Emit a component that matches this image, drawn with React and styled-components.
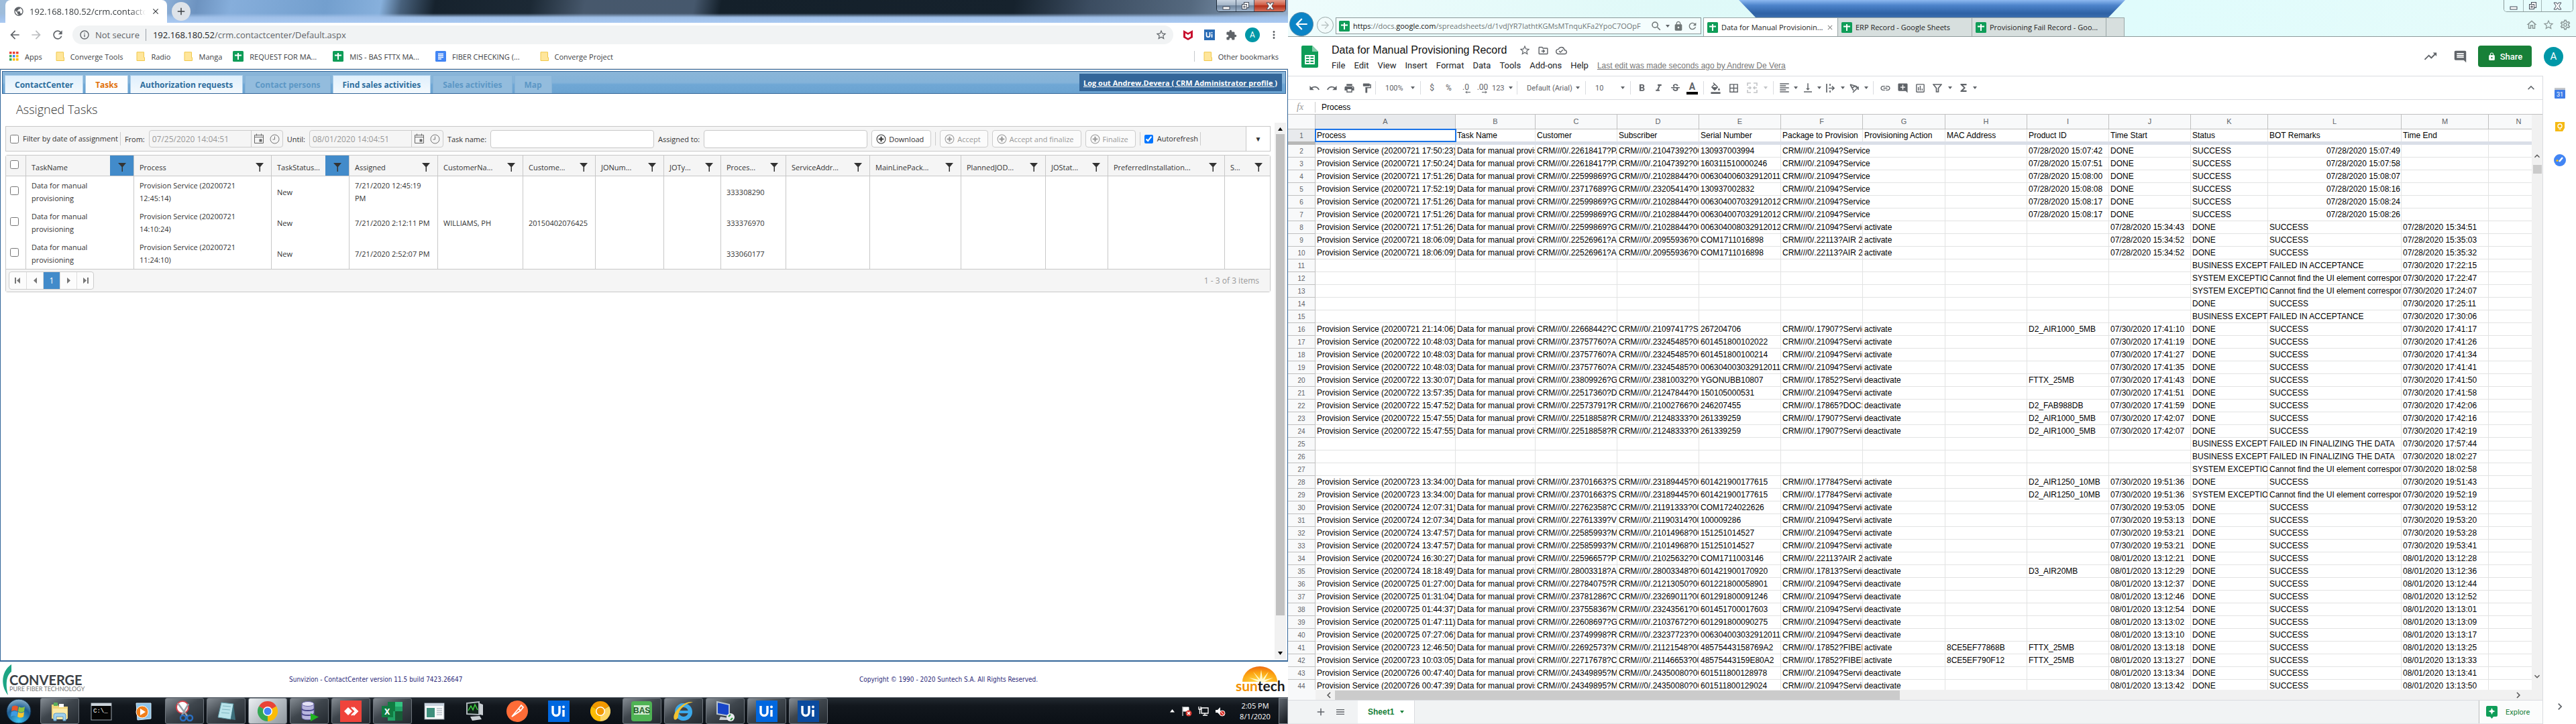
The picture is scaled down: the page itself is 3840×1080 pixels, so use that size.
import React from "react";
import styled, { createGlobalStyle, css } from "styled-components";
import {
  MdPublic, MdClose, MdAdd, MdArrowBack, MdArrowForward, MdRefresh, MdInfoOutline, MdStarBorder,
  MdExtension, MdMoreVert, MdUndo, MdRedo, MdPrint, MdFormatPaint, MdFormatBold, MdFormatItalic,
  MdStrikethroughS, MdFormatColorFill, MdBorderAll, MdFormatAlignLeft, MdVerticalAlignBottom,
  MdLink, MdAddComment, MdOutlineInsertChart, MdFunctions, MdKeyboardArrowUp, MdKeyboardArrowDown,
  MdChevronLeft, MdChevronRight, MdTrendingUp, MdComment, MdLock, MdOutlineDriveFileMove,
  MdOutlineCloudDone, MdMenu, MdSearch, MdOutlineHome, MdOutlineSettings,
} from "react-icons/md";

const segoe = `"Open Sans", "Noto Sans", sans-serif`;
const arial = `"Liberation Sans", Arial, sans-serif`;
const roboto = `Roboto, "Liberation Sans", sans-serif`;

const Global = createGlobalStyle`
  * { box-sizing: border-box; }
  body { margin: 0; background: #fff; overflow: hidden; }
  button, input, select { font: inherit; color: inherit; margin: 0; }
  button { cursor: pointer; }
  svg { display: block; flex: none; }
  a { color: inherit; }
`;

const Desktop = styled.div`
  display: grid;
  grid-template-columns: minmax(0, 1fr) minmax(0, 1fr);
  height: 100vh;
`;
const Screen = styled.div`
  display: flex;
  flex-direction: column;
  min-width: 0;
  min-height: 0;
  overflow: hidden;
  background: #fff;
  font-family: ${segoe};
`;
const Spacer = styled.div`
  flex: 1;
`;
const PlainButton = styled.button`
  display: inline-flex;
  align-items: center;
  justify-content: center;
  padding: 0;
  border: 0;
  background: none;
  width: ${(p) => (p.$w ? `${p.$w}px` : "auto")};
  height: ${(p) => (p.$h ? `${p.$h}px` : "auto")};
  color: ${(p) => p.$color || "#5f6368"};
  flex: none;
`;

/* ---------- window caption buttons ---------- */
const CaptionBox = styled.div`
  display: flex;
  height: 18px;
  border: 1px solid ${(p) => (p.$light ? "#8c9c9c" : "#1d2a38")};
  border-top: 0;
  border-radius: 0 0 5px 5px;
  overflow: hidden;
`;
const Caption = styled.button`
  display: flex;
  align-items: center;
  justify-content: center;
  width: ${(p) => p.$w}px;
  padding: 0;
  border: 0;
  border-left: ${(p) => (p.$first ? 0 : 1)}px solid ${(p) => (p.$light ? "#a4b6b6" : "#4b5b70")};
  background: ${(p) =>
    p.$light ? "#e6fcfc" : p.$close
      ? "linear-gradient(#e3a08f, #cf5a42 45%, #b3301a 50%, #d4705a)"
      : "linear-gradient(#c9d5e2, #a4b5c8 45%, #71869e 50%, #9db2c9)"};
`;
const Captions = ({ light }) => (
  <CaptionBox $light={light}>
    <Caption $w={28} $first $light={light} aria-label="Minimize">
      <svg width="12" height="12"><rect x="1" y="7" width="10" height="4" fill="#fff" stroke="#444b58" /></svg>
    </Caption>
    <Caption $w={27} $light={light} aria-label="Restore">
      <svg width="13" height="13" fill="#fff" stroke="#444b58"><rect x="4.5" y="1.5" width="7" height="8" /><rect x="1.5" y="4.5" width="7" height="7" /><rect x="4" y="7" width="2" height="2" /></svg>
    </Caption>
    <Caption $w={47} $close $light={light} aria-label="Close">
      <svg width="13" height="12" viewBox="0 0 13 12"><path d="M1 1h4l1.5 2.5L8 1h4L8.7 6 12 11H8L6.5 8.5 5 11H1l3.300-5z" fill="#fff" stroke="#444b58" /></svg>
    </Caption>
  </CaptionBox>
);

/* ---------- chrome browser ---------- */
const TitleBar = styled.header`
  display: flex;
  height: 34px;
  flex: none;
  padding: 0 3px 0 8px;
  background:
    linear-gradient(rgba(163, 196, 236, 0) 20px, #a0c0e8 26px, #a9c9f2 34px),
    linear-gradient(100deg, #9fbddb 0, #8fb1d8 240px, #6d93c0 290px, #86aedb 340px, #739fce 480px, #87b0dc 560px, #48617c 590px, #16222d 640px, #1c2935 780px, #47586c 860px, #46586d 1020px, #14202a 1060px, #16222d 1490px, #3b4c60 1600px, #55697f 1750px, #93abc6 1880px);
`;
const BrowserTab = styled.div`
  display: flex;
  align-items: center;
  gap: 8px;
  width: 241px;
  padding: 0 10px 0 12px;
  border-radius: 8px 8px 0 0;
  background: #fff;
  font-size: 13px;
  color: #3c4043;
`;
const TabTitle = styled.span`
  flex: 1;
  overflow: hidden;
  white-space: nowrap;
  mask-image: linear-gradient(90deg, #000 88%, transparent);
`;
const NewTab = styled(PlainButton)`
  align-self: center;
  margin-left: 7px;
  border-radius: 50%;
  background: #dee3e9;
`;
const NavBar = styled.div`
  display: flex;
  align-items: center;
  height: 36px;
  flex: none;
  padding: 0 5px 0 6px;
`;
const AddressBar = styled.div`
  display: flex;
  align-items: center;
  flex: 1;
  height: 28px;
  margin: 0 6px;
  padding: 0 9px 0 10px;
  border-radius: 14px;
  background: #f1f3f4;
  font-size: 13px;
  line-height: 18px;
  color: #5f6368;
`;
const NotSecure = styled.span`
  margin-left: 8px;
  padding-right: 9px;
  border-right: 1px solid #9aa0a6;
  white-space: nowrap;
`;
const AddressInput = styled.div`
  flex: 1;
  margin-left: 10px;
  b { font-weight: 400; color: #202124; }
`;
const Avatar = styled.button`
  display: flex;
  align-items: center;
  justify-content: center;
  width: ${(p) => p.$size}px;
  height: ${(p) => p.$size}px;
  padding: 0;
  border: 0;
  border-radius: 50%;
  background: #0097a7;
  color: #fff;
  font: ${(p) => p.$text}px ${roboto};
`;
const Bookmarks = styled.nav`
  display: flex;
  align-items: center;
  height: 33px;
  flex: none;
  padding: 0 14px 4px;
  border-bottom: 1px solid #d5d7da;
  font-size: 11px;
  color: #3c4043;
`;
const Bookmark = styled.a`
  display: flex;
  align-items: center;
  gap: 9px;
  margin-right: ${(p) => p.$after || 0}px;
  white-space: nowrap;
  text-decoration: none;
`;
const BookmarkDivider = styled.div`
  width: 1px;
  height: 16px;
  margin-right: 13px;
  background: #c6c9cc;
`;

/* ---------- CRM page ---------- */
const CrmFrame = styled.section`
  display: flex;
  flex-direction: column;
  flex: 1;
  min-height: 0;
  border: 1px solid #336699;
  border-bottom-width: 2px;
`;
const TabStrip = styled.nav`
  display: flex;
  align-items: flex-end;
  height: 34px;
  flex: none;
  margin: 2px 2px 0;
  padding: 0 5px 0 3px;
  border: 1px solid #336699;
  background: linear-gradient(#8ab5d8, #84b3d9 50%, #6fa7d5 60%, #6ba3d1);
  font-size: 12px;
  font-weight: 700;
`;
const CrmTab = styled.button`
  height: 27px;
  margin-right: 3px;
  padding: 0 14px;
  border: 1px solid #a9cdea;
  border-bottom: 0;
  background: linear-gradient(#dfeffc, #f4f9fd);
  color: #2e6e9e;
  font-weight: 700;
  white-space: nowrap;
  ${(p) => p.$active && css`
    background: #fcfdfe;
    color: #e17009;
  `}
  &:disabled {
    background: #93bcdd;
    border-color: #86b3d8;
    color: #5c97c5;
  }
`;
const Logout = styled.a`
  display: flex;
  align-items: center;
  height: 26px;
  margin-bottom: 3px;
  padding: 0 7px 0 6px;
  background: #336699;
  color: #fff;
  font-size: 11px;
  white-space: nowrap;
`;
const CrmContent = styled.div`
  display: flex;
  flex: 1;
  min-height: 0;
  padding: 0 2px 2px 7px;
`;
const CrmMain = styled.main`
  flex: 1;
  min-width: 0;
  margin-right: 6px;
  font-size: 12px;
  color: #333;
`;
const PageTitle = styled.h1`
  height: 48px;
  margin: 0;
  padding-left: 16px;
  font-size: 18px;
  font-weight: 300;
  line-height: 46px;
  color: #333;
`;
const FilterBar = styled.form`
  display: flex;
  align-items: center;
  gap: 6px;
  height: 38px;
  margin-bottom: 5px;
  padding-left: 6px;
  border: 1px solid #c8c8c8;
  background: #f5f5f5;
  white-space: nowrap;
  font-size: 11px;
`;
const CheckLabel = styled.label`
  display: flex;
  align-items: center;
  gap: 6px;
  padding-right: 3px;
  border-right: 1px solid #ccc;
  line-height: 20px;
`;
const Tick = styled.input.attrs({ type: "checkbox" })`
  width: 13px;
  height: 13px;
`;
const DateBox = styled.div`
  display: flex;
  align-items: center;
  width: 200px;
  height: 26px;
  flex: none;
  padding: 0 4px;
  border: 1px solid #ccc;
  border-radius: 4px;
  color: #999;
`;
const DateInput = styled.input`
  flex: 1;
  width: 0;
  min-width: 0;
  height: 24px;
  margin-right: 3px;
  padding: 0;
  border: 0;
  border-right: 1px solid #ccc;
  background: none;
  font-size: 12px;
`;
const TextBox = styled.input`
  flex: 1;
  min-width: 0;
  height: 27px;
  border: 1px solid #c8c8c8;
  border-radius: 4px;
  background: #fff;
`;
const ActionButton = styled.button`
  display: flex;
  align-items: center;
  gap: 4px;
  height: 26px;
  padding: 0 10px 0 6px;
  border: 1px solid #ccc;
  border-radius: 4px;
  background: #fff;
  &:disabled { color: #999; background: #fbfbfb; }
`;
const BarDivider = styled.div`
  width: 1px;
  height: 20px;
  background: #ccc;
`;
const Overflow = styled.button`
  width: 36px;
  align-self: stretch;
  margin-left: 61px;
  padding: 0;
  border: 0;
  border-left: 1px solid #c8c8c8;
  background: #fff;
  font-size: 10px;
`;
const GridBox = styled.div`
  border: 1px solid #c8c8c8;
  border-radius: 3px;
`;
const TaskTable = styled.table`
  width: 100%;
  table-layout: fixed;
  border-collapse: separate;
  border-spacing: 0;
  font-size: 11px;
`;
const TaskHead = styled.th`
  height: 31px;
  padding: 0 0 0 ${(p) => (p.$first ? 6 : 8)}px;
  border-bottom: 1px solid #c8c8c8;
  border-left: ${(p) => (p.$first ? 0 : 1)}px solid #c8c8c8;
  background: #f5f5f5;
  font-weight: 400;
  text-align: left;
`;
const HeadInner = styled.div`
  display: flex;
  align-items: center;
  justify-content: space-between;
  height: 30px;
  white-space: nowrap;
`;
const HeadText = styled.span`
  padding-top: 5px;
`;
const FilterButton = styled.button`
  display: flex;
  align-items: center;
  justify-content: center;
  width: 35px;
  height: 30px;
  flex: none;
  padding: 5px 0 0;
  border: 0;
  background: ${(p) => (p.$on ? "#428bca" : "none")};
`;
const TaskCell = styled.td`
  height: 46px;
  padding: 0 0 0 ${(p) => (p.$first ? 6 : 8)}px;
  border-left: ${(p) => (p.$first ? 0 : 1)}px solid #c8c8c8;
  line-height: 19px;
  color: #333;
`;
const GridFooter = styled.footer`
  display: flex;
  align-items: center;
  justify-content: space-between;
  height: 34px;
  padding: 0 16px 0 4px;
  border-top: 1px solid #c8c8c8;
  background: #f5f5f5;
  color: #999;
`;
const Pager = styled.div`
  display: flex;
  border: 1px solid #ccc;
  border-radius: 4px;
  background: #fcfcfc;
  overflow: hidden;
`;
const PageButton = styled.button`
  display: flex;
  align-items: center;
  justify-content: center;
  width: 25px;
  height: 25px;
  padding: 0;
  border: 0;
  border-left: ${(p) => (p.$first ? 0 : 1)}px solid #ddd;
  background: ${(p) => (p.$on ? "#428bca" : "none")};
  color: ${(p) => (p.$on ? "#fff" : "#777")};
`;
const VScroll = styled.div`
  display: flex;
  flex-direction: column;
  align-items: center;
  width: ${(p) => p.$w}px;
  flex: none;
  margin-top: ${(p) => p.$top || 0}px;
  padding: ${(p) => p.$pad};
  background: #f1f1f1;
`;
const ScrollTrack = styled.div`
  display: flex;
  flex: 1;
  padding: 3px 0 52px;
`;
const Thumb = styled.div`
  width: 13px;
  height: ${(p) => p.$h || "auto"};
  margin-top: ${(p) => p.$top || 0}px;
  background: ${(p) => p.$color};
`;
const CrmFooter = styled.footer`
  display: flex;
  align-items: center;
  height: 53px;
  flex: none;
  padding: 0 4px;
  font: 10px "DejaVu Sans Condensed", "DejaVu Sans", sans-serif;
  color: #2d2a7a;
`;
const FooterText = styled.span`
  width: ${(p) => p.$w}px;
  white-space: nowrap;
`;

/* ---------- taskbar ---------- */
const Taskbar = styled.footer`
  display: flex;
  align-items: stretch;
  height: 40px;
  flex: none;
  border-top: 1px solid #5b636c;
  background: linear-gradient(#232a31, #12171d 30%, #0b1016);
  color: #fff;
`;
const StartButton = styled(PlainButton)`
  width: 56px;
  margin-right: 4px;
`;
const TaskButton = styled.button`
  display: flex;
  align-items: center;
  justify-content: center;
  width: 58px;
  margin-right: 4px;
  padding: 0;
  border: 1px solid ${(p) => (p.$open ? "#6e757d" : "transparent")};
  border-radius: 3px;
  background: ${(p) =>
    p.$focus ? "linear-gradient(135deg, #eceff2, #b9c0c6 50%, #8f979e)"
      : p.$open ? "linear-gradient(150deg, #858c93, #3f464d 45%, #23292f)" : "none"};
`;
const Tray = styled.div`
  display: flex;
  align-items: center;
  gap: 9px;
`;
const Clock = styled.time`
  display: flex;
  flex-direction: column;
  align-items: center;
  width: 70px;
  font-size: 11px;
  line-height: 16px;
`;
const ShowDesktop = styled.button`
  width: 14px;
  padding: 0;
  border: 1px solid #7b828a;
  background: linear-gradient(135deg, #5f666e, #14191f);
`;

/* ---------- IE window ---------- */
const IeBar = styled.header`
  position: relative;
  z-index: 0;
  display: flex;
  align-items: flex-end;
  height: 55px;
  flex: none;
  padding-left: 2px;
  border-bottom: 1px solid #8d9a9b;
  background: linear-gradient(90deg, #eefcfc, #dff9f8 30%, #e0fcfc 66%, #e6fbfa);
  &::before {
    content: "";
    position: absolute;
    z-index: -1;
    top: 0;
    left: 35%;
    width: 30%;
    height: 27px;
    background: linear-gradient(#8db9f0, #4d84cb 8px, #2f62a5 20px, #3d6fae);
    clip-path: polygon(0 0, 100% 0, calc(100% - 26px) 100%, 26px 100%);
  }
`;
const IeBack = styled.button`
  display: flex;
  align-items: center;
  justify-content: center;
  width: 36px;
  height: 36px;
  flex: none;
  padding: 0;
  border: 1px solid #5f8aa5;
  border-radius: 50%;
  background: #0b84c6;
`;
const IeForward = styled(IeBack)`
  width: 25px;
  height: 25px;
  margin: 0 3px 4px 5px;
  border-color: #9aa8a8;
  background: #f2fbfb;
`;
const IeAddress = styled.div`
  display: flex;
  align-items: center;
  gap: 5px;
  width: 545px;
  height: 25px;
  margin-bottom: 3px;
  padding: 0 4px;
  border: 1px solid #8d9a9b;
  background: #f4fdfd;
  font-size: 11px;
  color: #6f7676;
`;
const IeUrl = styled.span`
  flex: 1;
  overflow: hidden;
  white-space: nowrap;
  b { font-weight: 400; color: #111; }
`;
const IeTab = styled.div`
  display: flex;
  align-items: center;
  gap: 5px;
  width: ${(p) => p.$w}px;
  height: 28px;
  margin-left: ${(p) => (p.$on ? 3 : 0)}px;
  padding: 0 5px;
  border: 1px solid #9aa6a6;
  border-bottom: 0;
  border-left-width: ${(p) => (p.$on ? 1 : 0)}px;
  background: ${(p) => (p.$on ? "#fff" : "#d7dfde")};
  font-size: 11px;
  white-space: nowrap;
  color: #222;
`;
const IeTabTitle = styled.span`
  flex: 1;
`;
const IeRight = styled.div`
  display: flex;
  flex-direction: column;
  align-items: flex-end;
  align-self: stretch;
  padding-right: 4px;
`;
const IeTools = styled.div`
  display: flex;
  margin-top: 10px;
`;

/* ---------- google sheets ---------- */
const DocHeader = styled.div`
  display: flex;
  height: 58px;
  flex: none;
  padding: 13px 19px 0 20px;
`;
const DocTitles = styled.div`
  flex: 1;
  margin-left: 20px;
`;
const TitleRow = styled.div`
  display: flex;
  align-items: center;
  gap: 10px;
  height: 18px;
  margin-top: -2px;
`;
const DocTitle = styled.h2`
  margin: 0 8px 0 0;
  font: 400 16px/18px ${arial};
  color: #111;
`;
const MenuRow = styled.div`
  display: flex;
  gap: 13px;
  margin-top: 5px;
  font: 13px/18px ${roboto};
  color: #202124;
`;
const MenuItem = styled.button`
  padding: 0;
  border: 0;
  background: none;
`;
const LastEdit = styled.a`
  font: 12px/18px ${arial};
  color: #777;
`;
const HeaderActions = styled.div`
  display: flex;
  align-items: center;
  height: 32px;
`;
const Share = styled.button`
  display: flex;
  align-items: center;
  justify-content: center;
  gap: 6px;
  width: 80px;
  height: 32px;
  margin: 0 18px 0 4px;
  border: 0;
  border-radius: 4px;
  background: #188038;
  color: #fff;
  font: 500 13px ${roboto};
`;
const SheetBody = styled.div`
  display: flex;
  flex: 1;
  min-height: 0;
`;
const SheetMain = styled.div`
  display: flex;
  flex-direction: column;
  flex: 1;
  min-width: 0;
  border-top: 1px solid #dadce0;
`;
const SidePanel = styled.aside`
  display: flex;
  flex-direction: column;
  align-items: center;
  width: 50px;
  flex: none;
  padding: 16px 0;
  border-left: 1px solid #dadce0;
  gap: 30px;
`;
const ToolRow = styled.div`
  display: flex;
  align-items: center;
  height: 35px;
  flex: none;
  padding: 0 5px 0 26px;
  border-bottom: 1px solid #dadce0;
  font: 12px ${roboto};
  color: #5f6368;
`;
const ToolGroup = styled.div`
  display: flex;
  align-items: center;
  padding: 0 ${(p) => (p.$flush ? 0 : 4)}px;
  border-right: ${(p) => (p.$last ? 0 : 1)}px solid #dadce0;
  height: 20px;
`;
const Combo = styled.button`
  display: flex;
  align-items: center;
  justify-content: space-between;
  width: 35px;
  padding: 0 3px;
  border: 0;
  background: none;
`;
const NumberFormat = styled(Combo)`
  padding: 0 2px;
  font-size: 11px;
`;
const CaretMark = styled.i`
  width: 0;
  height: 0;
  border: 3px solid transparent;
  border-top: 4px solid ${(p) => p.$color || "#5f6368"};
  border-bottom: 0;
`;
const Picker = styled.label`
  display: flex;
  align-items: center;
  width: ${(p) => p.$w}px;
  padding: 0 8px 0 14px;
  font-size: 11px;
  select {
    flex: 1;
    min-width: 0;
    padding: 0;
    border: 0;
    background: none;
    appearance: none;
    outline: 0;
  }
`;
const TextColour = styled.span`
  padding: 0 4px;
  border-bottom: 4px solid #000;
  font: 700 14px/15px ${roboto};
`;
const FormulaRow = styled.div`
  display: flex;
  align-items: center;
  height: 22px;
  flex: none;
  border-bottom: 1px solid #c0c0c0;
  font: 12px ${arial};
`;
const Fx = styled.span`
  width: 41px;
  padding-left: 13px;
  border-right: 1px solid #ccc;
  font: italic 14px "Liberation Serif", serif;
  color: #9a9a9a;
`;
const FormulaInput = styled.input`
  flex: 1;
  padding: 0 9px;
  border: 0;
  color: #000;
`;
const GridWrap = styled.div`
  display: flex;
  flex: 1;
  min-height: 0;
`;
const TableClip = styled.div`
  flex: 1;
  min-width: 0;
  overflow: hidden;
`;
const SheetTable = styled.table`
  width: calc(100% + 26px);
  table-layout: fixed;
  border-collapse: separate;
  border-spacing: 0;
  font: 12px/17px ${arial};
  color: #000;
`;
const ColHead = styled.th`
  height: 22px;
  padding: 0;
  border-right: 1px solid #c0c0c0;
  border-bottom: 1px solid #c0c0c0;
  background: ${(p) => (p.$on ? "#e8eaed" : "#f8f9fa")};
  font-size: 11px;
  font-weight: 400;
  color: #5f6368;
`;
const RowHead = styled.th`
  height: ${(p) => (p.$top ? 18 : 19)}px;
  padding: 0;
  border-right: 1px solid #c0c0c0;
  border-bottom: ${(p) => (p.$top ? 0 : 1)}px solid #c0c0c0;
  background: ${(p) => (p.$top ? "#e8eaed" : "#f8f9fa")};
  font-size: 10px;
  font-weight: 400;
  color: #5f6368;
`;
const Cell = styled.td`
  height: ${(p) => (p.$top ? 18 : 19)}px;
  padding: 0 1px 0 2px;
  border-right: 1px solid ${(p) => (p.$spill ? "transparent" : "#e2e3e3")};
  border-bottom: ${(p) => (p.$top ? 0 : 1)}px solid #e2e3e3;
  overflow: ${(p) => (p.$spill ? "visible" : "hidden")};
  white-space: nowrap;
  text-align: ${(p) => (p.$right ? "right" : "left")};
  ${(p) => p.$selected && css`outline: 2px solid #1a73e8; outline-offset: -1px;`}
`;
const FreezeBar = styled.td`
  height: 5px;
  padding: 0;
  background: ${(p) => (p.$dark ? "#b7b7b7" : "#dadfe8")};
`;
const HScroll = styled.div`
  display: flex;
  align-items: center;
  height: 15px;
  flex: none;
  padding: 0 27px 0 52px;
  background: linear-gradient(90deg, #f8f9fa 41px, #f1f1f1 41px);
`;
const HThumb = styled.div`
  width: 47%;
  height: 14px;
  background: #cbcbcb;
`;
const SheetTabs = styled.footer`
  display: flex;
  align-items: stretch;
  height: 36px;
  flex: none;
  padding-left: 35px;
  border-top: 1px solid #dadce0;
  border-bottom: 1px solid #e4e6e8;
  background: #f1f3f4;
`;
const SheetTab = styled.button`
  display: flex;
  align-items: center;
  gap: 9px;
  margin-left: 12px;
  padding: 0 15px;
  border: 0;
  border-right: 1px solid #dadce0;
  background: #fff;
  color: #188038;
  font: 700 12px ${arial};
`;
const Explore = styled.button`
  display: flex;
  align-items: center;
  gap: 12px;
  width: 95px;
  padding: 0 0 0 10px;
  border: 0;
  border-left: 1px solid #bbb;
  background: #fbfcfc;
  color: #188038;
  font: 11px ${roboto};
`;

/* ---------- small drawings ---------- */
const Folder = () => (
  <svg width="13" height="14" viewBox="0 0 13 14"><path d="M1 .8h10.500v8h1v4.700H1z" fill="#ffe69b" stroke="#f0c84b" /></svg>
);
const SheetMark = () => (
  <svg width="16" height="16" viewBox="0 0 16 16"><rect width="16" height="16" rx="1.5" fill="#0f9d58" /><path d="M8 3v10M3 6.500h10" stroke="#fff" strokeWidth="2" /></svg>
);
const DocMark = () => (
  <svg width="16" height="16" viewBox="0 0 16 16"><rect width="16" height="16" rx="1.5" fill="#4285f4" /><path d="M4 4.500h8M4 7h8M4 9.500h8M4 12h5" stroke="#fff" strokeWidth="1.4" /></svg>
);
const AppsMark = () => (
  <svg width="14" height="14" viewBox="0 0 14 14">
    {["#ea4335", "#ea4335", "#ea4335", "#34a853", "#4285f4", "#fbbc05", "#34a853", "#fbbc05", "#fbbc05"].map((c, i) => (
      <rect key={i} x={(i % 3) * 5} y={Math.floor(i / 3) * 5} width="3.5" height="3.5" fill={c} />
    ))}
  </svg>
);
const Funnel = () => (
  <svg width="12" height="13" viewBox="0 0 12 13"><path d="M0 0h12L7 6v7H5.500V6z" fill="#333" /></svg>
);
const PlusCircle = () => (
  <svg width="15" height="15" viewBox="0 0 14 14" fill="none" stroke="currentColor"><circle cx="7" cy="7" r="6" /><path d="M7 3.500v7M3.500 7h7" strokeWidth="2" /></svg>
);
const CalendarMark = () => (
  <svg width="24" height="16" viewBox="0 0 24 16" fill="none" stroke="#666"><path d="M1.500 2.500h13v12h-13zM1.500 5.500h13M4.500.5v3M11.500.5v3" /><rect x="9" y="9" width="3" height="3" fill="#666" /></svg>
);
const ClockMark = () => (
  <svg width="15" height="15" viewBox="0 0 15 15" fill="none" stroke="#777"><circle cx="7.5" cy="7.5" r="6.5" /><path d="M7.500 3.500v4.500H4.500" /></svg>
);
const Tri = ({ d }) => (
  <svg width="9" height="9" viewBox="0 0 9 9"><path d={d} fill="currentColor" /></svg>
);
const UiMark = ({ size = 32, fill = "#0067df" }) => (
  <svg width={size} height={size} viewBox="0 0 32 32"><rect width="32" height="32" fill={fill} /><path d="M7 8v9.500a5 5 0 0 0 10 0V8M23 14v10" fill="none" stroke="#fff" strokeWidth="3.4" /><circle cx="23" cy="9.5" r="2" fill="#fff" /></svg>
);
const McAfee = () => (
  <svg width="14" height="16" viewBox="0 0 14 16"><path d="M0 1l7 4 7-4v11l-7 4-7-4zM3 5.500v5L7 13l4-2.500v-5L7 8z" fill="#c8102e" fillRule="evenodd" /></svg>
);
const ConvergeLogo = () => (
  <svg width="126" height="48" viewBox="0 0 126 48">
    <path d="M13 1C-3 12-3 34 8 47 4 32 5 18 13 12z" fill="#1da584" />
    <text x="10" y="32" fontFamily="Lato, sans-serif" fontSize="20" fontWeight="700" fill="#3c4146">CONVERGE</text>
    <text x="10" y="41" fontFamily="Lato, sans-serif" fontSize="9" fill="#777">PURE FIBER TECHNOLOGY</text>
  </svg>
);
const SuntechLogo = () => (
  <svg width="74" height="42" viewBox="0 0 74 42">
    <defs><radialGradient id="sun" cx=".5" cy="1" r="1"><stop offset="0" stopColor="#ffe14d" /><stop offset=".6" stopColor="#fca311" /><stop offset="1" stopColor="#ee6a12" /></radialGradient></defs>
    <path d="M10 24a26 23 0 0 1 52 0z" fill="url(#sun)" />
    <path d="M36 25L20 18l14 3-8-12 10 11 2-14 2 14 9-11-6 12 13-3-15 7z" fill="#fff8d0" />
    <text x="0" y="38" fontFamily="Lato, sans-serif" fontSize="21" fontWeight="700" fill="#f29100">sun<tspan fill="#1a1a1a">tech</tspan></text>
  </svg>
);
const SheetsLogo = () => (
  <svg width="25" height="33" viewBox="0 0 25 33"><path d="M2 0h14l9 9v22a2 2 0 0 1-2 2H2a2 2 0 0 1-2-2V2a2 2 0 0 1 2-2z" fill="#0f9d58" /><path d="M16 0l9 9h-9z" fill="#87ceac" /><path d="M6 15h13v12H6zM6 19h13M6 23h13M12.500 15v12" fill="none" stroke="#fff" strokeWidth="1.8" /></svg>
);
const MergeMark = () => (
  <svg width="16" height="16" viewBox="0 0 16 16" fill="none" stroke="#c3c5c8" strokeWidth="1.6"><path d="M1 5V1h5M10 1h5v4M1 11v4h5M10 15h5v-4M1 8h5M15 8h-5M4 6l2 2-2 2M12 6l-2 2 2 2" /></svg>
);
const WrapMark = () => (
  <svg width="15" height="15" viewBox="0 0 15 15" fill="none" stroke="#5f6368" strokeWidth="1.7"><path d="M2 1v13M7 1v3M7 11v3M5 7.500h8M10 4.500l3 3-3 3" /></svg>
);
const RotateMark = () => (
  <svg width="16" height="16" viewBox="0 0 16 16" fill="none" stroke="#5f6368" strokeWidth="1.6"><path d="M2 3l10 3M2 3l5 9M5 8l5-3M6 15l8-8M10 7h4v4" /></svg>
);
const FilterMark = () => (
  <svg width="14" height="14" viewBox="0 0 14 14" fill="none" stroke="#5f6368" strokeWidth="1.7"><path d="M1 2h12L8.500 7.500V13h-3V7.500z" /></svg>
);
const DecimalMark = ({ text, left }) => (
  <svg width="22" height="18" viewBox="0 0 22 18"><text x="11" y="12" fontFamily="Roboto, sans-serif" fontSize="12" fill="#5f6368" textAnchor="middle">{text}</text><path d={left ? "M18 15.500h-7M13 13.500l-2 2 2 2" : "M10 15.500h7M15 13.500l2 2-2 2"} fill="none" stroke="#5f6368" /></svg>
);
const GoogleDisc = ({ a, b, c, center }) => (
  <svg width="30" height="30" viewBox="0 0 30 30">
    <path d="M15 15L2 7.500A15 15 0 0 1 28 7.500z" fill={a} /><path d="M15 15L2 7.500A15 15 0 0 0 15 30z" fill={b} /><path d="M15 15L28 7.500A15 15 0 0 1 15 30z" fill={c} />
    <circle cx="15" cy="15" r="7" fill="#fff" /><circle cx="15" cy="15" r="5.5" fill={center} />
  </svg>
);

const art = {
  explorer: <><path d="M4 6h9l2 3h13v18H4z" fill="#f3d67a" /><path d="M7 3h6v5H7z" fill="#5cae5c" /><path d="M15 5h7v5h-7z" fill="#fff" /><path d="M6 12h21v16H6z" fill="#fbe9a6" /><path d="M7 30v-8a3 3 0 0 1 3-3h12a3 3 0 0 1 3 3v8h-4v-6H11v6z" fill="#9fd0ee" stroke="#5d9cc6" /></>,
  cmd: <><rect x="1" y="4" width="30" height="25" fill="#050505" stroke="#9aa4ae" /><rect x="1" y="4" width="30" height="4" fill="#cbd3da" /><text x="4" y="18" fontSize="9" fill="#fff" fontFamily="Liberation Mono, monospace">C:\_</text></>,
  media: <><path d="M6 4h22v23l-20 2z" fill="#8cc4ea" stroke="#d7ecfa" /><circle cx="15" cy="17" r="9" fill="#f07f1b" stroke="#fff" /><path d="M12 12l8 5-8 5z" fill="#fff" /></>,
  snip: <><circle cx="13" cy="10" r="9" fill="#fff" stroke="#d8404a" strokeWidth="2" /><path d="M6 4l15 20M22 5L12 22" stroke="#9aa1a8" strokeWidth="2.5" /><circle cx="24" cy="26" r="4" fill="none" stroke="#2b6fc2" strokeWidth="2.5" /><circle cx="14" cy="26" r="4" fill="none" stroke="#2b6fc2" strokeWidth="2.5" /></>,
  note: <><path d="M9 3l18 2-4 23L4 25z" fill="#b9e3ea" stroke="#5f9aa6" /><path d="M23 28l4-23 3 24z" fill="#3d6f7b" /><path d="M11 8l12 1M10 13l12 1M9 18l12 1" stroke="#7fb6c1" /></>,
  db: <><path d="M5 5v20c0 5 18 5 18 0V5z" fill="#b8b6df" stroke="#6a67a8" /><ellipse cx="14" cy="5" rx="9" ry="3.5" fill="#e4e3f6" stroke="#6a67a8" /><path d="M5 12c0 4 18 4 18 0M5 19c0 4 18 4 18 0" fill="none" stroke="#4a478c" strokeWidth="2" /><path d="M18 19l12 5.500L18 31z" fill="#21b321" /></>,
  anydesk: <><rect width="32" height="32" fill="#ef443b" /><path d="M12 10l6 6-6 6-6-6z" fill="#fff" /><path d="M17 10l6 6-6 6M20 10l6 6-6 6" fill="none" stroke="#fff" strokeWidth="2" /></>,
  excel: <><path d="M9 2h22v28H9z" fill="#21a366" /><path d="M9 2h11v14H9z" fill="#107c41" /><path d="M20 2h11v7H20z" fill="#33c481" /><path d="M20 16h11v14H20z" fill="#185c37" /><rect y="8" width="17" height="17" fill="#107c41" /><text x="4" y="21" fontSize="13" fontWeight="700" fill="#fff" fontFamily="Roboto, sans-serif">X</text></>,
  windowed: <><rect x="2" y="4" width="29" height="24" fill="#f7f9fa" stroke="#8a949e" /><rect x="2" y="4" width="29" height="4" fill="#c8d3de" /><path d="M5 11h12v14H5z" fill="#3f8f7d" /><path d="M20 12h8M20 15h8M20 18h8M20 21h8" stroke="#9aa6b2" /></>,
  monitor: <><path d="M3 4l18-2v19L3 20z" fill="#10231a" stroke="#aeb6bc" strokeWidth="2" /><path d="M5 15l4-7 3 6 3-8 4 8" stroke="#3fd33f" fill="none" strokeWidth="1.5" /><path d="M22 4l5 2v16l-5-1zM8 24l14-1 3 5-14 2z" fill="#c9ced2" /></>,
  postman: <><circle cx="16" cy="16" r="16" fill="#ff6c37" /><path d="M8 24l10-12 3 3zM18 12l4-5 3 3-4 5z" fill="none" stroke="#fff" strokeWidth="1.8" /></>,
  bas: <><rect y="1" width="31" height="30" rx="4" fill="#4fb354" /><path d="M4 7h23v14H4z" fill="#e5f4e4" opacity=".85" /><text x="3" y="19" fontSize="12" fontWeight="700" fill="#1c5b26" fontFamily="Liberation Sans, sans-serif">BAS</text></>,
  ie: <><circle cx="16" cy="17" r="10" fill="none" stroke="#3ba9ea" strokeWidth="6" /><path d="M8 17h18" stroke="#3ba9ea" strokeWidth="4" /><path d="M2 28C-3 18 20-3 30 3c-10-1-22 11-22 20 0 3-3 7-6 5z" fill="#f2c230" /></>,
  remote: <><path d="M4 2l18 4v17L4 20z" fill="#1745c9" stroke="#b9c4cc" strokeWidth="2" /><path d="M9 24l12 2v3H7z" fill="#c9ced2" /><circle cx="24" cy="25" r="6" fill="#e8ebee" /><path d="M21 24l3-3M24 29l3-3" stroke="#2a9a3a" strokeWidth="2" /></>,
};
const Art = ({ name }) => <svg width="32" height="32" viewBox="0 0 32 32">{art[name]}</svg>;

/* ---------- data ---------- */
const taskColumns = [
  ["", 29], ["TaskName", 161, true], ["Process", 205], ["TaskStatus...", 116, true], ["Assigned", 132],
  ["CustomerNa...", 127], ["Custome...", 108], ["JONum...", 102], ["JOTy...", 85], ["Proces...", 97],
  ["ServiceAddr...", 125], ["MainLinePack...", 136], ["PlannedJOD...", 126], ["JOStat...", 93],
  ["PreferredInstallation...", 174], ["S...", 68],
];
const tasks = [
  ["12:45:14)", ["7/21/2020 12:45:19", "PM"], "", "", "333308290"],
  ["14:10:24)", ["7/21/2020 2:12:11 PM"], "WILLIAMS, PH", "20150402076425", "333376970"],
  ["11:24:10)", ["7/21/2020 2:52:07 PM"], "", "", "333060177"],
];
const sheetCols = [["A", 209], ["B", 119], ["C", 122], ["D", 122], ["E", 122], ["F", 122], ["G", 123], ["H", 122], ["I", 122], ["J", 122], ["K", 115], ["L", 199], ["M", 130], ["N", 0]];
const sheetHeads = ["Process", "Task Name", "Customer", "Subscriber", "Serial Number", "Package to Provision", "Provisioning Action", "MAC Address", "Product ID", "Time Start", "Status", "BOT Remarks", "Time End", ""];
const BE = "BUSINESS EXCEPTI";
const SE = "SYSTEM EXCEPTIO";
const CF = "Cannot find the UI element correspon";
// date | customer | subscriber | serial | package | action | mac | product | start | status | remarks | end
const source = `0721 17:50:23|22618417?PA|21047392?00|130937003994|21094?Service|||07/28/2020 15:07:42|DONE|SUCCESS|07/28/2020 15:07:49|
0721 17:50:24|22618417?PA|21047392?00|160311510000246|21094?Service|||07/28/2020 15:07:51|DONE|SUCCESS|07/28/2020 15:07:58|
0721 17:51:26|22599869?GA|21028844?00|006304006032912011|21094?Service|||07/28/2020 15:08:00|DONE|SUCCESS|07/28/2020 15:08:07|
0721 17:52:19|23717689?GE|23205414?00|130937002832|21094?Service|||07/28/2020 15:08:08|DONE|SUCCESS|07/28/2020 15:08:16|
0721 17:51:26|22599869?GA|21028844?00|006304007032912012|21094?Service|||07/28/2020 15:08:17|DONE|SUCCESS|07/28/2020 15:08:24|
0721 17:51:26|22599869?GA|21028844?00|006304007032912012|21094?Service|||07/28/2020 15:08:17|DONE|SUCCESS|07/28/2020 15:08:26|
0721 17:51:26|22599869?GA|21028844?00|006304008032912012|21094?Servic|activate|||07/28/2020 15:34:43|DONE|SUCCESS|07/28/2020 15:34:51
0721 18:06:09|22526961?AN|20955936?00|COM1711016898|22113?AIR 2|activate|||07/28/2020 15:34:52|DONE|SUCCESS|07/28/2020 15:35:03
0721 18:06:09|22526961?AN|20955936?00|COM1711016898|22113?AIR 2|activate|||07/28/2020 15:34:52|DONE|SUCCESS|07/28/2020 15:35:32
|||||||||${BE}|FAILED IN ACCEPTANCE|07/30/2020 17:22:15
|||||||||${SE}|${CF}|07/30/2020 17:22:47
|||||||||${SE}|${CF}|07/30/2020 17:24:07
|||||||||DONE|SUCCESS|07/30/2020 17:25:11
|||||||||${BE}|FAILED IN ACCEPTANCE|07/30/2020 17:30:06
0721 21:14:06|22668442?Cu|21097417?S|267204706|17907?Servic|activate||D2_AIR1000_5MB|07/30/2020 17:41:10|DONE|SUCCESS|07/30/2020 17:41:17
0722 10:48:03|23757760?AG|23245485?00|601451800102022|21094?Servic|activate|||07/30/2020 17:41:19|DONE|SUCCESS|07/30/2020 17:41:26
0722 10:48:03|23757760?AG|23245485?00|601451800100214|21094?Servic|activate|||07/30/2020 17:41:27|DONE|SUCCESS|07/30/2020 17:41:34
0722 10:48:03|23757760?AG|23245485?00|006304003032912011|21094?Servic|activate|||07/30/2020 17:41:35|DONE|SUCCESS|07/30/2020 17:41:41
0722 13:30:07|23809926?GO|23810032?00|YGONUBB10807|17852?Servic|deactivate||FTTX_25MB|07/30/2020 17:41:43|DONE|SUCCESS|07/30/2020 17:41:50
0722 13:57:35|22517360?DU|21247844?00|150105000531|21094?Servic|activate|||07/30/2020 17:41:51|DONE|SUCCESS|07/30/2020 17:41:58
0722 15:47:52|22573791?RA|21002766?00|246207455|17865?DOCS|deactivate||D2_FAB988DB|07/30/2020 17:41:59|DONE|SUCCESS|07/30/2020 17:42:06
0722 15:47:55|22518858?RA|21248333?00|261339259|17907?Servic|deactivate||D2_AIR1000_5MB|07/30/2020 17:42:07|DONE|SUCCESS|07/30/2020 17:42:16
0722 15:47:55|22518858?RA|21248333?00|261339259|17907?Servic|deactivate||D2_AIR1000_5MB|07/30/2020 17:42:07|DONE|SUCCESS|07/30/2020 17:42:19
|||||||||${BE}|FAILED IN FINALIZING THE DATA|07/30/2020 17:57:44
|||||||||${BE}|FAILED IN FINALIZING THE DATA|07/30/2020 18:02:27
|||||||||${SE}|${CF}|07/30/2020 18:02:58
0723 13:34:00|23701663?SA|23189445?00|601421900177615|17784?Servic|activate||D2_AIR1250_10MB|07/30/2020 19:51:36|DONE|SUCCESS|07/30/2020 19:51:43
0723 13:34:00|23701663?SA|23189445?00|601421900177615|17784?Servic|activate||D2_AIR1250_10MB|07/30/2020 19:51:36|${SE}|${CF}|07/30/2020 19:52:19
0724 12:07:31|22762358?CA|21191333?00|COM1724022626|21094?Servic|activate|||07/30/2020 19:53:05|DONE|SUCCESS|07/30/2020 19:53:12
0724 12:07:34|22761339?VI|21190314?00|100009286|21094?Servic|activate|||07/30/2020 19:53:13|DONE|SUCCESS|07/30/2020 19:53:20
0724 13:47:57|22585993?MI|21014968?00|151251014527|21094?Servic|activate|||07/30/2020 19:53:21|DONE|SUCCESS|07/30/2020 19:53:28
0724 13:47:57|22585993?MI|21014968?00|151251014527|21094?Servic|activate|||07/30/2020 19:53:21|DONE|SUCCESS|07/30/2020 19:53:41
0724 16:30:27|22596657?PE|21025632?00|COM1711003146|22113?AIR 2|activate|||08/01/2020 13:12:21|DONE|SUCCESS|08/01/2020 13:12:28
0724 18:18:49|28003318?AG|28003348?00|601421900170920|17813?Servic|deactivate||D3_AIR20MB|08/01/2020 13:12:29|DONE|SUCCESS|08/01/2020 13:12:36
0725 01:27:00|22784075?RA|21213050?00|601221800058901|21094?Servic|deactivate|||08/01/2020 13:12:37|DONE|SUCCESS|08/01/2020 13:12:44
0725 01:31:04|23781286?CA|23269011?00|601291800091246|21094?Servic|deactivate|||08/01/2020 13:12:46|DONE|SUCCESS|08/01/2020 13:12:52
0725 01:44:37|23755836?MA|23243561?00|601451700017603|21094?Servic|deactivate|||08/01/2020 13:12:54|DONE|SUCCESS|08/01/2020 13:13:01
0725 01:47:11|22608697?GO|21037672?00|601291800090275|21094?Servic|deactivate|||08/01/2020 13:13:02|DONE|SUCCESS|08/01/2020 13:13:09
0725 07:27:06|23749998?RE|23237723?00|006304003032912011|21094?Servic|deactivate|||08/01/2020 13:13:10|DONE|SUCCESS|08/01/2020 13:13:17
0723 12:46:50|22692573?MI|21121548?00|48575443158769A2|17852?FIBEF|activate|8CE5EF77868B|FTTX_25MB|08/01/2020 13:13:18|DONE|SUCCESS|08/01/2020 13:13:25
0723 10:03:05|22717678?CO|21146653?00|48575443159E80A2|17852?FIBEF|activate|8CE5EF790F12|FTTX_25MB|08/01/2020 13:13:27|DONE|SUCCESS|08/01/2020 13:13:33
0726 00:47:40|24349895?MA|24350080?00|601511800128978|21094?Servic|deactivate|||08/01/2020 13:13:34|DONE|SUCCESS|08/01/2020 13:13:41
0726 00:47:39|24349895?MA|24350080?00|601511800129024|21094?Servic|deactivate|||08/01/2020 13:13:42|DONE|SUCCESS|08/01/2020 13:13:50`;
const crm = (v) => (v ? `CRM///0/.${v}` : "");
const records = source.split("\n").map((line) => {
  const [date, cust, sub, serial, pack, ...rest] = line.split("|");
  return [
    date && `Provision Service (2020${date})`, date && "Data for manual provisi",
    crm(cust), crm(sub), serial, crm(pack), ...rest, "",
  ];
});

const pinned = [
  ["explorer", 1], ["cmd", 0], ["media", 0], ["snip", 1], ["note", 1], ["chrome", 2], ["db", 1], ["anydesk", 1],
  ["excel", 1], ["windowed", 0], ["monitor", 0], ["postman", 0], ["ui", 0], ["canary", 0], ["bas", 1], ["ie", 1],
  ["remote", 1], ["ui", 1], ["uidark", 1],
];
const TaskIcon = ({ name }) => {
  if (name === "chrome") return <GoogleDisc a="#e94335" b="#34a853" c="#fbbc05" center="#4285f4" />;
  if (name === "canary") return <GoogleDisc a="#f29900" b="#fbbc04" c="#fdd663" center="#f29900" />;
  if (name === "ui") return <UiMark />;
  if (name === "uidark") return <UiMark fill="#0a4a9e" />;
  return <Art name={name} />;
};

/* ---------- left screen ---------- */
function ChromeChrome() {
  return (
    <>
      <TitleBar>
        <BrowserTab>
          <MdPublic size={16} color="#5f6368" />
          <TabTitle>192.168.180.52/crm.contactcente</TabTitle>
          <PlainButton aria-label="Close tab"><MdClose size={14} color="#3c4043" /></PlainButton>
        </BrowserTab>
        <NewTab $w={28} $h={28} aria-label="New tab"><MdAdd size={18} color="#3c4043" /></NewTab>
        <Spacer />
        <Captions />
      </TitleBar>
      <NavBar>
        <PlainButton $w={32} aria-label="Back"><MdArrowBack size={20} /></PlainButton>
        <PlainButton $w={32} $color="#babcbe" aria-label="Forward"><MdArrowForward size={20} /></PlainButton>
        <PlainButton $w={32} aria-label="Reload"><MdRefresh size={20} /></PlainButton>
        <AddressBar>
          <MdInfoOutline size={16} />
          <NotSecure>Not secure</NotSecure>
          <AddressInput><b>192.168.180.52</b>/crm.contactcenter/Default.aspx</AddressInput>
          <MdStarBorder size={18} />
        </AddressBar>
        <PlainButton $w={32} aria-label="McAfee"><McAfee /></PlainButton>
        <PlainButton $w={32} aria-label="UiPath"><UiMark size={16} fill="#2a6cb5" /></PlainButton>
        <PlainButton $w={32} aria-label="Extensions"><MdExtension size={17} /></PlainButton>
        <PlainButton as="div" $w={32}><Avatar $size={22} $text={12}>A</Avatar></PlainButton>
        <PlainButton $w={32} aria-label="Menu"><MdMoreVert size={18} /></PlainButton>
      </NavBar>
      <Bookmarks>
        <Bookmark href="#" $after={20}><AppsMark />Apps</Bookmark>
        <Bookmark href="#" $after={20}><Folder />Converge Tools</Bookmark>
        <Bookmark href="#" $after={20}><Folder />Radio</Bookmark>
        <Bookmark href="#" $after={16}><Folder />Manga</Bookmark>
        <Bookmark href="#" $after={24}><SheetMark />REQUEST FOR MA...</Bookmark>
        <Bookmark href="#" $after={24}><SheetMark />MIS - BAS FTTX MA...</Bookmark>
        <Bookmark href="#" $after={30}><DocMark />FIBER CHECKING (...</Bookmark>
        <Bookmark href="#"><Folder />Converge Project</Bookmark>
        <Spacer />
        <BookmarkDivider />
        <Bookmark href="#"><Folder />Other bookmarks</Bookmark>
      </Bookmarks>
    </>
  );
}

const DateField = ({ id, value }) => (
  <DateBox>
    <DateInput id={id} defaultValue={value} disabled />
    <CalendarMark />
    <ClockMark />
  </DateBox>
);

function Crm() {
  return (
    <CrmFrame>
      <TabStrip>
        <CrmTab>ContactCenter</CrmTab>
        <CrmTab $active>Tasks</CrmTab>
        <CrmTab>Authorization requests</CrmTab>
        <CrmTab disabled>Contact persons</CrmTab>
        <CrmTab>Find sales activities</CrmTab>
        <CrmTab disabled>Sales activities</CrmTab>
        <CrmTab disabled>Map</CrmTab>
        <Spacer />
        <Logout href="#">Log out Andrew.Devera ( CRM Administrator profile )</Logout>
      </TabStrip>
      <CrmContent>
        <CrmMain>
          <PageTitle>Assigned Tasks</PageTitle>
          <FilterBar>
            <CheckLabel><Tick />Filter by date of assignment</CheckLabel>
            <label htmlFor="from">From:</label>
            <DateField id="from" value="07/25/2020 14:04:51" />
            <label htmlFor="until">Until:</label>
            <DateField id="until" value="08/01/2020 14:04:51" />
            <label htmlFor="task">Task name:</label>
            <TextBox id="task" />
            <label htmlFor="assignee">Assigned to:</label>
            <TextBox id="assignee" />
            <ActionButton type="button"><PlusCircle />Download</ActionButton>
            <BarDivider />
            <ActionButton type="button" disabled><PlusCircle />Accept</ActionButton>
            <ActionButton type="button" disabled><PlusCircle />Accept and finalize</ActionButton>
            <ActionButton type="button" disabled><PlusCircle />Finalize</ActionButton>
            <BarDivider />
            <CheckLabel><Tick defaultChecked />Autorefresh</CheckLabel>
            <Overflow type="button">▼</Overflow>
          </FilterBar>
          <GridBox>
            <TaskTable>
              <colgroup>{taskColumns.map(([n, w]) => <col key={n} width={w} />)}</colgroup>
              <thead>
                <tr>
                  {taskColumns.map(([name, , on], i) => (
                    <TaskHead key={name} $first={i === 0}>
                      {i === 0 ? <Tick aria-label="Select all" /> : (
                        <HeadInner><HeadText>{name}</HeadText><FilterButton $on={on} aria-label={`Filter ${name}`}><Funnel /></FilterButton></HeadInner>
                      )}
                    </TaskHead>
                  ))}
                </tr>
              </thead>
              <tbody>
                {tasks.map(([time, assigned, customer, account, process]) => (
                  <tr key={time}>
                    <TaskCell $first><Tick aria-label="Select row" /></TaskCell>
                    <TaskCell>Data for manual<br />provisioning</TaskCell>
                    <TaskCell>Provision Service (20200721<br />{time}</TaskCell>
                    <TaskCell>New</TaskCell>
                    <TaskCell>{assigned[0]}{assigned[1] && <br />}{assigned[1]}</TaskCell>
                    <TaskCell>{customer}</TaskCell>
                    <TaskCell>{account}</TaskCell>
                    <TaskCell /><TaskCell />
                    <TaskCell>{process}</TaskCell>
                    <TaskCell /><TaskCell /><TaskCell /><TaskCell /><TaskCell /><TaskCell />
                  </tr>
                ))}
              </tbody>
            </TaskTable>
            <GridFooter>
              <Pager>
                <PageButton $first aria-label="First"><Tri d="M0 0h2v9H0zM8 0v9L3 4.500z" /></PageButton>
                <PageButton aria-label="Previous"><Tri d="M7 0v9L2 4.500z" /></PageButton>
                <PageButton $on>1</PageButton>
                <PageButton aria-label="Next"><Tri d="M2 0v9l5-4.500z" /></PageButton>
                <PageButton aria-label="Last"><Tri d="M1 0v9l5-4.500zM7 0h2v9H7z" /></PageButton>
              </Pager>
              <span>1 - 3 of 3 items</span>
            </GridFooter>
          </GridBox>
        </CrmMain>
        <VScroll $w={17} $top={43} $pad="5px 0 4px">
          <Tri d="M4.500 2L8 7H1z" />
          <ScrollTrack><Thumb $color="#c1c1c1" /></ScrollTrack>
          <Tri d="M4.500 7L8 2H1z" />
        </VScroll>
      </CrmContent>
    </CrmFrame>
  );
}

function WindowsTaskbar() {
  return (
    <Taskbar>
      <StartButton aria-label="Start">
        <svg width="38" height="38" viewBox="0 0 38 38">
          <defs><radialGradient id="orb" cx=".5" cy=".9" r=".9"><stop offset="0" stopColor="#3fc4ee" /><stop offset=".6" stopColor="#1b5d95" /><stop offset="1" stopColor="#8fb4cc" /></radialGradient></defs>
          <circle cx="19" cy="19" r="18" fill="url(#orb)" stroke="#0d2a44" />
          <path d="M9 12c3-2 6-2 9 0l-1 7c-3-2-6-2-9 0z" fill="#e8572a" /><path d="M19 12c3 2 6 2 9 0l-1 7c-3 2-6 2-9 0z" fill="#8cc63f" />
          <path d="M8 20c3-2 6-2 9 0l-1 7c-3-2-6-2-9 0z" fill="#3f9be0" /><path d="M18 20c3 2 6 2 9 0l-1 7c-3 2-6 2-9 0z" fill="#fbc52d" />
        </svg>
      </StartButton>
      {pinned.map(([name, state], i) => (
        <TaskButton key={i} $open={state > 0} $focus={state === 2} aria-label={name}><TaskIcon name={name} /></TaskButton>
      ))}
      <Spacer />
      <Tray>
        <Tri d="M4.500 2L8 6.500H1z" />
        <svg width="16" height="16" viewBox="0 0 16 16"><path d="M2 1v14M3 2h8v6H3z" fill="#fff" stroke="#fff" /><circle cx="11" cy="11" r="4.5" fill="#d8322b" /><path d="M9 9l4 4M13 9l-4 4" stroke="#fff" strokeWidth="1.5" /></svg>
        <svg width="16" height="16" viewBox="0 0 16 16" fill="none" stroke="#fff" strokeWidth="1.3"><path d="M5 3h10v8H5zM7 14h7M10 11v3M1 1v4h3V1M2.500 5v7" /></svg>
        <svg width="16" height="16" viewBox="0 0 16 16"><path d="M1 6h3l4-4v12L4 10H1z" fill="#fff" /><circle cx="11" cy="11" r="4" fill="#d8322b" stroke="#fff" /><path d="M8.500 8.500l5 5" stroke="#fff" /></svg>
        <Clock><span>2:05 PM</span><span>8/1/2020</span></Clock>
      </Tray>
      <ShowDesktop aria-label="Show desktop" />
    </Taskbar>
  );
}

/* ---------- right screen ---------- */
function IeChrome() {
  return (
    <IeBar>
      <IeBack aria-label="Back"><MdArrowBack size={26} color="#fff" /></IeBack>
      <IeForward aria-label="Forward"><MdArrowForward size={17} color="#b9c3c3" /></IeForward>
      <IeAddress>
        <SheetMark />
        <IeUrl><b>https</b>://docs.<b>google.com</b>/spreadsheets/d/1vdJYR7IathtKGMsMTnquKFa2YpoC7OOpF</IeUrl>
        <MdSearch size={18} /><CaretMark /><MdLock size={16} /><MdRefresh size={16} />
      </IeAddress>
      <IeTab $on $w={201}><SheetMark /><IeTabTitle>Data for Manual Provisionin...</IeTabTitle><MdClose size={12} color="#888" /></IeTab>
      <IeTab $w={200}><SheetMark />ERP Record - Google Sheets</IeTab>
      <IeTab $w={200}><SheetMark />Provisioning Fail Record - Goo...</IeTab>
      <IeTab $w={27} />
      <Spacer />
      <IeRight>
        <Captions light />
        <IeTools>
          <PlainButton $w={25} aria-label="Home"><MdOutlineHome size={18} color="#8a9696" /></PlainButton>
          <PlainButton $w={25} aria-label="Favorites"><MdStarBorder size={18} color="#8a9696" /></PlainButton>
          <PlainButton $w={25} aria-label="Tools"><MdOutlineSettings size={18} color="#8a9696" /></PlainButton>
        </IeTools>
      </IeRight>
    </IeBar>
  );
}

const Pick = ({ name, value, w }) => (
  <Picker $w={w}><select aria-label={name} defaultValue={value}><option>{value}</option></select><CaretMark /></Picker>
);

function Tools() {
  const B = (name, Icon, w = 25, size = 17) => <PlainButton $w={w} aria-label={name}><Icon size={size} /></PlainButton>;
  return (
    <ToolRow>
      {B("Undo", MdUndo, 26)}{B("Redo", MdRedo, 26)}{B("Print", MdPrint, 26)}{B("Paint format", MdFormatPaint, 26)}
      <ToolGroup $flush />
      <ToolGroup $flush><Pick name="Zoom" value="100%" w={66} /></ToolGroup>
      <ToolGroup>
        <PlainButton $w={25}>$</PlainButton>
        <PlainButton $w={25}>%</PlainButton>
        <PlainButton $w={25} aria-label="Fewer decimals"><DecimalMark text=".0" left /></PlainButton>
        <PlainButton $w={25} aria-label="More decimals"><DecimalMark text=".00" /></PlainButton>
        <NumberFormat>123<CaretMark /></NumberFormat>
      </ToolGroup>
      <ToolGroup $flush><Pick name="Font" value="Default (Arial)" w={101} /></ToolGroup>
      <ToolGroup $flush><Pick name="Size" value="10" w={66} /></ToolGroup>
      <ToolGroup>
        {B("Bold", MdFormatBold)}{B("Italic", MdFormatItalic)}{B("Strike", MdStrikethroughS)}
        <PlainButton $w={25} aria-label="Text color"><TextColour>A</TextColour></PlainButton>
      </ToolGroup>
      <ToolGroup>
        {B("Fill", MdFormatColorFill, 27)}{B("Borders", MdBorderAll, 27)}
        <PlainButton $w={27} aria-label="Merge"><MergeMark /></PlainButton>
        <PlainButton $w={14} aria-label="Merge options"><CaretMark $color="#c3c5c8" /></PlainButton>
      </ToolGroup>
      <ToolGroup>
        <Combo aria-label="Align"><MdFormatAlignLeft size={18} /><CaretMark /></Combo>
        <Combo aria-label="Vertical align"><MdVerticalAlignBottom size={18} /><CaretMark /></Combo>
        <Combo aria-label="Wrap"><WrapMark /><CaretMark /></Combo>
        <Combo aria-label="Rotate"><RotateMark /><CaretMark /></Combo>
      </ToolGroup>
      <ToolGroup $last>
        {B("Link", MdLink, 26)}{B("Comment", MdAddComment, 26)}{B("Chart", MdOutlineInsertChart, 26)}
        <PlainButton $w={26} aria-label="Filter"><FilterMark /></PlainButton>
        <PlainButton $w={12} aria-label="Filter options"><CaretMark /></PlainButton>
        {B("Functions", MdFunctions, 28, 18)}
        <PlainButton $w={6} aria-label="Function options"><CaretMark /></PlainButton>
      </ToolGroup>
      <Spacer />
      {B("Collapse", MdKeyboardArrowUp, 25, 20)}
    </ToolRow>
  );
}

function Spreadsheet() {
  return (
    <SheetTable>
      <colgroup><col width={41} />{sheetCols.map(([n, w]) => <col key={n} width={w || undefined} />)}</colgroup>
      <thead>
        <tr><ColHead />{sheetCols.map(([n], i) => <ColHead key={n} $on={i === 0}>{n}</ColHead>)}</tr>
      </thead>
      <tbody>
        <tr>
          <RowHead $top>1</RowHead>
          {sheetHeads.map((h, i) => <Cell key={i} $top $selected={i === 0}>{h}</Cell>)}
        </tr>
        <tr><FreezeBar $dark /><FreezeBar colSpan={14} /></tr>
        {records.map((row, r) => (
          <tr key={r}>
            <RowHead>{r + 2}</RowHead>
            {row.map((v, c) => (
              <Cell key={c} $spill={c === 5 && v && !row[6]} $right={c === 11 && /^\d/.test(v)}>{v}</Cell>
            ))}
          </tr>
        ))}
      </tbody>
    </SheetTable>
  );
}

function Sheets() {
  return (
    <>
      <DocHeader>
        <SheetsLogo />
        <DocTitles>
          <TitleRow>
            <DocTitle>Data for Manual Provisioning Record</DocTitle>
            <MdStarBorder size={18} color="#5f6368" />
            <MdOutlineDriveFileMove size={17} color="#5f6368" />
            <MdOutlineCloudDone size={17} color="#5f6368" />
          </TitleRow>
          <MenuRow>
            {["File", "Edit", "View", "Insert", "Format", "Data", "Tools", "Add-ons", "Help"].map((m) => <MenuItem key={m}>{m}</MenuItem>)}
            <LastEdit href="#">Last edit was made seconds ago by Andrew De Vera</LastEdit>
          </MenuRow>
        </DocTitles>
        <HeaderActions>
          <PlainButton $w={45} aria-label="Activity"><MdTrendingUp size={22} /></PlainButton>
          <PlainButton $w={45} aria-label="Comments"><MdComment size={21} /></PlainButton>
          <Share><MdLock size={13} />Share</Share>
          <Avatar $size={29} $text={15}>A</Avatar>
        </HeaderActions>
      </DocHeader>
      <SheetBody>
        <SheetMain>
          <Tools />
          <FormulaRow><Fx>fx</Fx><FormulaInput aria-label="Formula" defaultValue="Process" /></FormulaRow>
          <GridWrap>
            <TableClip><Spreadsheet /></TableClip>
            <VScroll $w={16} $pad="54px 0 12px">
              <MdKeyboardArrowUp size={16} color="#555" />
              <Thumb $h="13px" $top={5} $color="#cbcbcb" />
              <Spacer />
              <MdKeyboardArrowDown size={16} color="#555" />
            </VScroll>
          </GridWrap>
          <HScroll>
            <MdChevronLeft size={18} color="#555" />
            <HThumb />
            <Spacer />
            <MdChevronRight size={18} color="#555" />
          </HScroll>
          <SheetTabs>
            <PlainButton $w={28} aria-label="Add sheet"><MdAdd size={18} /></PlainButton>
            <PlainButton $w={29} aria-label="All sheets"><MdMenu size={16} /></PlainButton>
            <SheetTab>Sheet1<CaretMark $color="#188038" /></SheetTab>
            <Spacer />
            <Explore>
              <svg width="17" height="19" viewBox="0 0 17 19"><path d="M2 0h13a2 2 0 0 1 2 2v12a2 2 0 0 1-2 2h-4l-2.500 3L6 16H2a2 2 0 0 1-2-2V2a2 2 0 0 1 2-2z" fill="#0f9d58" /><path d="M8.500 3l1.500 3.500L13.500 8 10 9.500 8.500 13 7 9.500 3.500 8 7 6.500z" fill="#fff" /></svg>
              Explore
            </Explore>
          </SheetTabs>
        </SheetMain>
        <SidePanel>
          <svg width="16" height="20" viewBox="0 0 16 20"><rect y="2" width="16" height="4" fill="#c4c7cb" /><rect y="5" width="16" height="13" rx="1" fill="#3f7de8" /><text x="8" y="15" fontSize="9" textAnchor="middle" fill="#fff" fontFamily="Roboto, sans-serif">31</text></svg>
          <svg width="16" height="20" viewBox="0 0 16 20"><path d="M1 3h14v9l-3 5H1z" fill="#f5b912" /><circle cx="8" cy="9" r="3" fill="none" stroke="#fff" strokeWidth="1.3" /><path d="M6.500 14h3" stroke="#fff" /></svg>
          <svg width="18" height="20" viewBox="0 0 18 20"><circle cx="9" cy="10" r="9" fill="#4285f4" /><path d="M8 12l5-6" stroke="#fff" strokeWidth="2.5" /><circle cx="5" cy="10.5" r="1.6" fill="#fbbc04" /></svg>
          <Spacer />
          <MdChevronRight size={20} color="#5f6368" />
        </SidePanel>
      </SheetBody>
    </>
  );
}

export default function App() {
  return (
    <Desktop>
      <Global />
      <Screen>
        <ChromeChrome />
        <Crm />
        <CrmFooter>
          <ConvergeLogo />
          <Spacer />
          <FooterText $w={850}>Sunvizion - ContactCenter version 11.5 build 7423.26647</FooterText>
          <FooterText $w={561}>Copyright © 1990 - 2020 Suntech S.A. All Rights Reserved.</FooterText>
          <SuntechLogo />
        </CrmFooter>
        <WindowsTaskbar />
      </Screen>
      <Screen>
        <IeChrome />
        <Sheets />
      </Screen>
    </Desktop>
  );
}
